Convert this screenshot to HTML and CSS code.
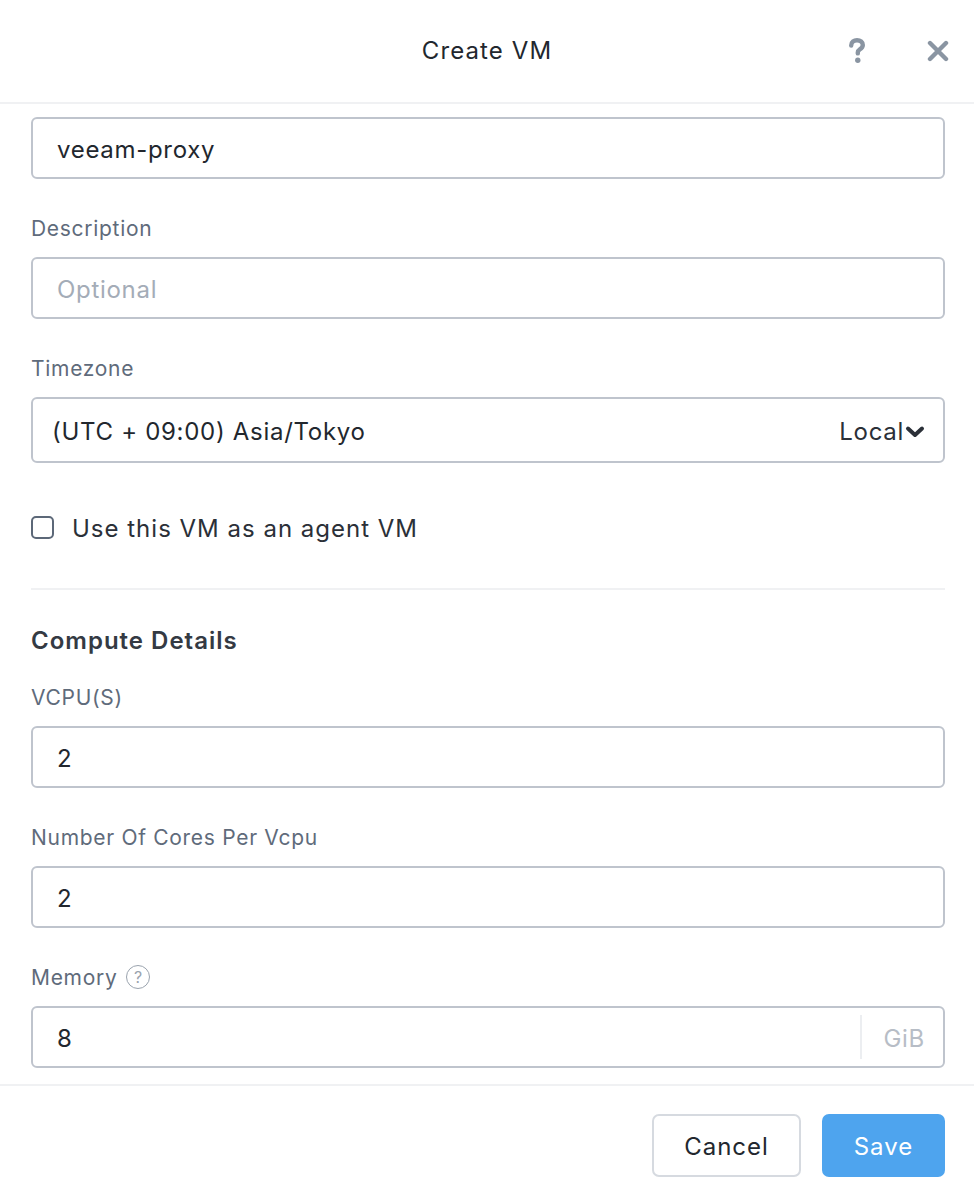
FILE: index.html
```html
<!DOCTYPE html>
<html>
<head>
<meta charset="utf-8">
<title>Create VM</title>
<link rel="stylesheet" href="styles.css">
</head>
<body>
<div class="modal">
  <header class="modal-header">
    <h1 class="modal-title">Create VM</h1>
    <div class="header-actions">
      <button class="icon-btn" aria-label="Help">
        <svg width="18" height="26" viewBox="0 0 18 26"><path d="M3.2 7.5 C3.2 4 6 2.2 9 2.2 C12.4 2.2 14.8 4.2 14.8 7 C14.8 9.3 13.4 10.4 11.8 11.4 C10.4 12.3 9.8 13 9.8 14.6 L9.8 15.4" fill="none" stroke="#8a95a2" stroke-width="4.4" stroke-linecap="round"/><circle cx="9.8" cy="22.2" r="2.7" fill="#8a95a2"/></svg>
      </button>
      <button class="icon-btn" aria-label="Close">
        <svg width="22" height="22" viewBox="0 0 22 22"><path d="M3 3 L19 19 M19 3 L3 19" stroke="#8a95a2" stroke-width="4.4" stroke-linecap="round"/></svg>
      </button>
    </div>
  </header>

  <div class="modal-body">
    <div class="input-box"><span class="value">veeam-proxy</span></div>

    <label class="field-label">Description</label>
    <div class="input-box"><span class="placeholder">Optional</span></div>

    <label class="field-label">Timezone</label>
    <div class="input-box select-box">
      <span class="value">(UTC + 09:00) Asia/Tokyo</span>
      <span class="select-right">Local<svg width="20" height="14" viewBox="0 0 20 14"><path d="M3 3.5 L10 10 L17 3.5" fill="none" stroke="#2b3038" stroke-width="4" stroke-linecap="round" stroke-linejoin="round"/></svg></span>
    </div>

    <div class="checkbox-row">
      <span class="checkbox"></span>
      <span class="checkbox-text">Use this VM as an agent VM</span>
    </div>

    <hr class="divider">

    <h2 class="section-title">Compute Details</h2>

    <label class="field-label first">VCPU(S)</label>
    <div class="input-box"><span class="value">2</span></div>

    <label class="field-label">Number Of Cores Per Vcpu</label>
    <div class="input-box"><span class="value">2</span></div>

    <label class="field-label">Memory <span class="help-circle">?</span></label>
    <div class="input-box addon-box">
      <span class="value">8</span>
      <span class="addon">GiB</span>
    </div>
  </div>

  <footer class="modal-footer">
    <button class="btn btn-secondary">Cancel</button>
    <button class="btn btn-primary">Save</button>
  </footer>
</div>
</body>
</html>
```

FILE: styles.css
```css
* { box-sizing: border-box; }
html, body { margin: 0; padding: 0; background: #fff; }
body {
  font-family: Inter, "Open Sans", sans-serif;
  color: #22272e;
  letter-spacing: 0.7px;
}
.modal {
  width: 974px;
  height: 1196px;
  display: flex;
  flex-direction: column;
  overflow: hidden;
}
.modal-header {
  height: 104px;
  flex: none;
  border-bottom: 2px solid #f0f1f3;
  display: flex;
  align-items: center;
  justify-content: center;
  position: relative;
}
.modal-title {
  margin: 0;
  font-size: 24px;
  font-weight: 400;
  color: #22272e;
  letter-spacing: 1.1px;
  position: relative;
  top: -1px;
}
.header-actions {
  position: absolute;
  right: 25px;
  top: 38px;
  display: flex;
  gap: 61px;
  align-items: center;
}
.icon-btn {
  background: none;
  border: 0;
  padding: 0;
  display: flex;
  align-items: center;
  cursor: pointer;
}
.modal-body {
  flex: 1;
  overflow: hidden;
  padding: 13px 29px 0 31px;
}
.input-box {
  height: 62px;
  border: 2px solid #bfc4cd;
  border-radius: 6px;
  display: flex;
  align-items: center;
  padding: 3px 24px 0;
  font-size: 24px;
}
.value { color: #22272e; }
.placeholder { color: #a4acb7; }
.field-label {
  display: block;
  margin: 35px 0 15px;
  height: 28px;
  line-height: 30px;
  font-size: 21px;
  color: #5f6b7b;
}
.field-label.first { margin-top: 28px; }
.select-box {
  height: 66px;
  justify-content: space-between;
  padding: 3px 18px 0 19px;
}
.select-right {
  display: flex;
  align-items: center;
  color: #2b3038;
}
.select-right svg { margin-left: 1px; margin-top: 0; }
.checkbox-row {
  margin-top: 49px;
  height: 30px;
  display: flex;
  align-items: center;
}
.checkbox {
  width: 23px;
  height: 23px;
  border: 2px solid #5c6878;
  border-radius: 5px;
  margin-right: 18px;
}
.checkbox-text {
  font-size: 24px;
  color: #2b3038;
  letter-spacing: 1px;
  position: relative;
  top: 1px;
}
.divider {
  border: 0;
  border-top: 2px solid #f0f1f3;
  margin: 46px 0 0;
}
.section-title {
  margin: 35px 0 0;
  height: 30px;
  line-height: 32px;
  font-size: 24px;
  font-weight: 600;
  color: #343a43;
  letter-spacing: 1px;
}
.help-circle {
  display: inline-flex;
  align-items: center;
  justify-content: center;
  width: 24px;
  height: 24px;
  border: 1.5px solid #9aa3ae;
  border-radius: 50%;
  font-size: 16px;
  color: #9aa3ae;
  letter-spacing: 0;
  vertical-align: middle;
  margin-left: 2px;
  position: relative;
  top: -2px;
  line-height: 1;
}
.addon-box {
  padding-right: 0;
  justify-content: space-between;
}
.addon {
  height: 44px;
  margin-top: -3px;
  border-left: 2px solid #eceef1;
  display: flex;
  align-items: center;
  padding: 3px 18px 0 21px;
  color: #b7bdc6;
}
.modal-footer {
  height: 112px;
  flex: none;
  border-top: 2px solid #f0f1f3;
  display: flex;
  justify-content: flex-end;
  align-items: flex-start;
  gap: 21px;
  padding: 28px 29px 0 0;
}
.btn {
  height: 63px;
  border-radius: 7px;
  font-family: inherit;
  font-size: 24px;
  letter-spacing: 1px;
  padding-top: 3px;
  cursor: pointer;
}
.btn-secondary {
  width: 149px;
  background: #fff;
  border: 2px solid #d6dae0;
  color: #22272e;
}
.btn-primary {
  width: 123px;
  background: #4ea4ee;
  border: 0;
  color: #fff;
}
```
